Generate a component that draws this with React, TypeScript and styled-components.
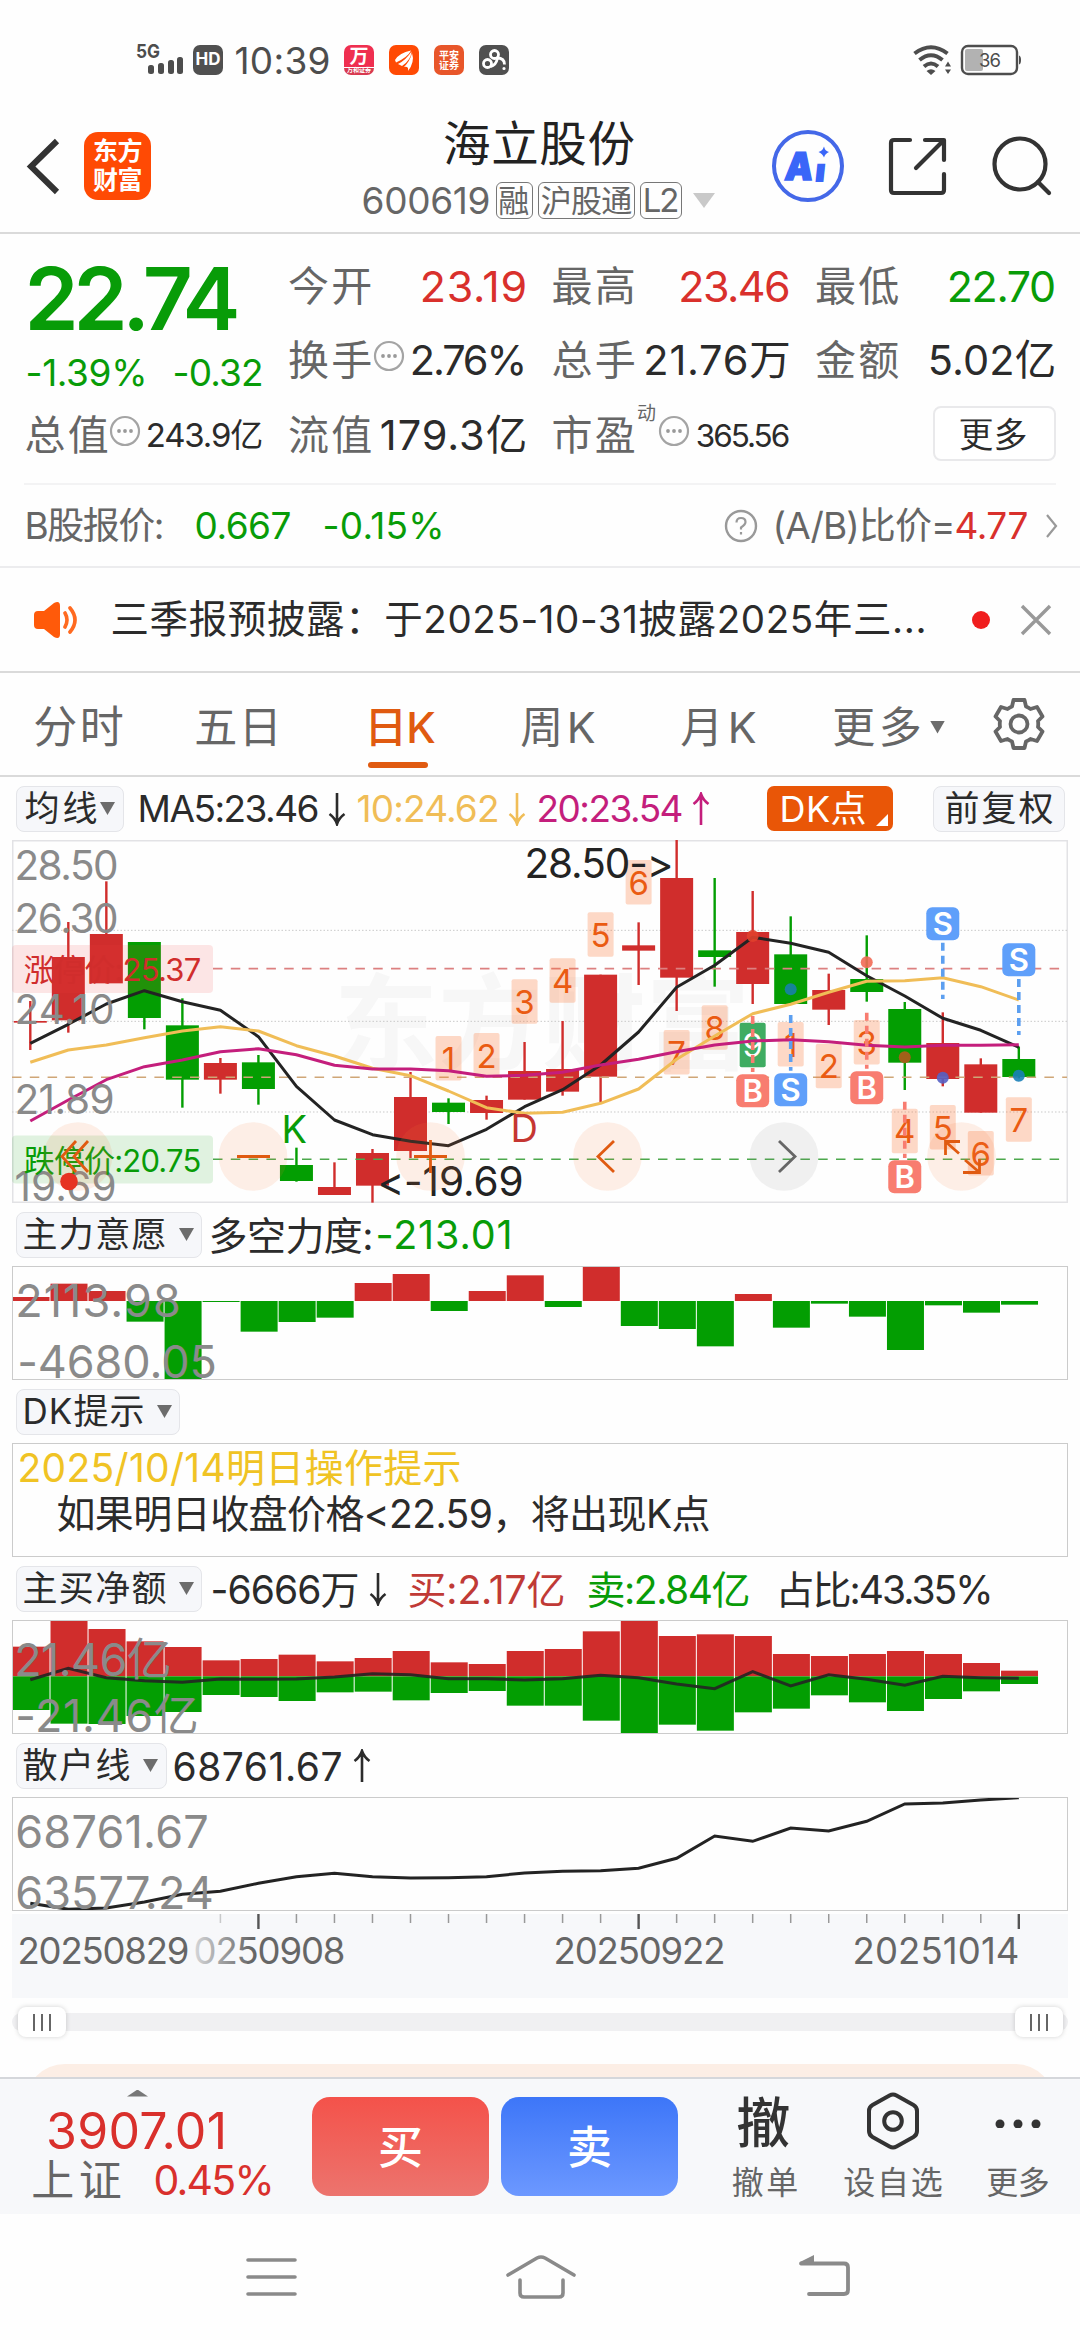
import React, { useLayoutEffect, useRef, useState } from 'react';
import styled, { createGlobalStyle } from 'styled-components';

const GREEN = '#089c08';
const RED = '#d9302c';
const UP = '#d02d2c';
const DOWN = '#039e02';
const ORANGE = '#e05a10';
const FONT = 'Inter, "Noto Sans CJK SC", sans-serif';

const Global = createGlobalStyle`
  body { margin: 0; background: #fefefe; font-family: ${FONT}; color: #2b2b2b; font-feature-settings: "calt" 0; }
  * { box-sizing: border-box; }
  svg { display: block; flex: none; }
`;

/* ---------- text that is tracked to fill a given measure ---------- */
const Label = styled.span<{ $w: number; $size: number; $color: string; $ml: number; $weight: number; $dy: number }>`
  display: block;
  flex: none;
  width: ${(p) => p.$w}px;
  margin-left: ${(p) => p.$ml}px;
  margin-top: ${(p) => p.$dy}px;
  font-size: ${(p) => p.$size}px;
  line-height: ${(p) => p.$size}px;
  font-weight: ${(p) => p.$weight};
  color: ${(p) => p.$color};
  white-space: nowrap;
  text-indent: -0.04em;
`;

type TProps = { w: number; s?: number; c?: string; ml?: number; wt?: number; dy?: number; children: string };

function T({ w, s = 37, c = '#2b2b2b', ml = 0, wt = 400, dy = 0, children }: TProps) {
  const ref = useRef<HTMLSpanElement>(null);
  const [track, setTrack] = useState(0);
  useLayoutEffect(() => {
    const el = ref.current;
    if (!el) return;
    const range = document.createRange();
    range.selectNodeContents(el);
    const natural = range.getBoundingClientRect().width;
    setTrack((w + s * 0.08 - natural) / Math.max(1, children.length - 1));
  }, []);
  return (
    <Label $w={w} $size={s} $color={c} $ml={ml} $weight={wt} $dy={dy}>
      <span ref={ref} style={{ letterSpacing: track }}>{children}</span>
    </Label>
  );
}

/* ---------- page bars ---------- */
const Page = styled.div`
  width: 1080px;
  height: 2340px;
  display: flex;
  flex-direction: column;
  overflow: hidden;
  background: #fefefe;
`;
const StatusBar = styled.div`
  height: 100px;
  padding: 20px 60px 0 136px;
  display: flex;
  align-items: center;
`;
const Badge = styled.div<{ $bg: string; $ml: number }>`
  width: 30px;
  height: 30px;
  margin-left: ${(p) => p.$ml}px;
  border-radius: 7px;
  background: ${(p) => p.$bg};
  overflow: hidden;
  display: flex;
  flex-direction: column;
  align-items: center;
  justify-content: center;
`;
const BadgeText = styled.span<{ $size: number; $color?: string }>`
  color: ${(p) => p.$color || '#fff'};
  font-size: ${(p) => p.$size}px;
  line-height: 1.05;
  font-weight: 700;
  white-space: nowrap;
`;
const Spacer = styled.div`
  flex: 1;
`;
const Header = styled.header`
  height: 134px;
  border-bottom: 2px solid #dadada;
  display: grid;
  grid-template-columns: 363px 352px 1fr;
`;
const HeaderSide = styled.div`
  display: flex;
  align-items: center;
`;
const HeaderTitle = styled.div`
  display: flex;
  flex-direction: column;
  padding-top: 19px;
`;
const Row = styled.div<{ $h?: number; $pl?: number }>`
  display: flex;
  align-items: center;
  flex: none;
  height: ${(p) => (p.$h ? p.$h + 'px' : 'auto')};
  padding-left: ${(p) => p.$pl || 0}px;
`;
const Logo = styled.div`
  width: 67px;
  height: 68px;
  margin-left: 24px;
  border-radius: 14px;
  background: #ff4a04;
  display: flex;
  flex-direction: column;
  align-items: center;
  justify-content: center;
  color: #fff;
  font-size: 25px;
  line-height: 29px;
  font-weight: 700;
  letter-spacing: -0.5px;
`;
const Tag = styled.span<{ $w: number; $ml: number }>`
  width: ${(p) => p.$w}px;
  height: 37px;
  margin-left: ${(p) => p.$ml}px;
  border: 1.5px solid #777;
  border-radius: 6px;
  display: flex;
  align-items: center;
  justify-content: center;
  flex: none;
`;

/* ---------- quote ---------- */
const Quote = styled.section`
  height: 249px;
  padding: 15px 24px 0 26px;
  display: grid;
  grid-template-columns: repeat(3, 237px) 239px;
  grid-template-rows: repeat(3, 74.5px);
  column-gap: 26.5px;
`;
const PriceCell = styled.div`
  grid-row: span 2;
  display: flex;
  flex-direction: column;
  padding-top: 5px;
`;
const Cell = styled.div`
  display: flex;
  align-items: center;
  justify-content: space-between;
  padding-right: 1px;
`;
const Pair = styled.div`
  display: flex;
  align-items: center;
`;
const Sup = styled.span`
  font-size: 19px;
  line-height: 20px;
  margin: -42px 0 0 3px;
  color: #666;
`;
const MoreButton = styled.button`
  width: 123px;
  height: 55px;
  margin: 8px 0 0 auto;
  border: 2px solid #e9e9eb;
  border-radius: 8px;
  background: #fff;
  padding: 0;
  display: flex;
  align-items: center;
  justify-content: center;
`;
const Rule = styled.div`
  height: 2px;
  flex: none;
  margin: 0 24px;
  background: #f3f3f4;
`;
const Strip = styled.section<{ $h: number; $line: string }>`
  height: ${(p) => p.$h}px;
  border-bottom: 2px solid ${(p) => p.$line};
  display: flex;
  align-items: center;
  flex: none;
`;
const RedDot = styled.span`
  width: 18px;
  height: 18px;
  border-radius: 50%;
  background: #f01e1e;
  margin-left: 47px;
`;
const Tab = styled.div<{ $w: number }>`
  width: ${(p) => p.$w}px;
  height: 100%;
  display: flex;
  align-items: center;
  position: relative;
  padding-top: 6px;
`;
const Underline = styled.i`
  position: absolute;
  left: 2px;
  bottom: 7px;
  width: 60px;
  height: 6px;
  border-radius: 3px;
  background: ${ORANGE};
`;

/* ---------- indicators ---------- */
const Picker = styled.div<{ $w: number; $ml?: number }>`
  width: ${(p) => p.$w}px;
  height: 46px;
  margin-left: ${(p) => p.$ml ?? 16}px;
  border: 1.5px solid #e4e5e9;
  border-radius: 8px;
  background: #f6f7fa;
  display: flex;
  align-items: center;
  flex: none;
  padding-left: 7px;
`;
const DkButton = styled.div`
  width: 126px;
  height: 45px;
  margin-left: 57px;
  border-radius: 7px;
  background: #e95607;
  display: flex;
  align-items: center;
  padding-left: 14px;
`;
const Caret = styled.i<{ $ml: number; $color?: string; $w?: number; $h?: number; $up?: boolean }>`
  flex: none;
  width: ${(p) => p.$w ?? 15}px;
  height: ${(p) => p.$h ?? 13}px;
  margin-left: ${(p) => p.$ml}px;
  background: ${(p) => p.$color || '#6c6c6c'};
  clip-path: ${(p) => (p.$up ? 'polygon(50% 0, 100% 100%, 0 100%)' : 'polygon(0 0, 100% 0, 50% 100%)')};
`;
const Panel = styled.div`
  margin: 0 12px;
  height: 114px;
  flex: none;
  border: 1.5px solid #cbcbcb;
  overflow: hidden;
`;
const Tip = styled(Panel)`
  padding: 0 0 0 6px;
`;
const Main = styled.div`
  margin: 0 12px;
  height: 363px;
  flex: none;
`;
const Axis = styled.div`
  margin: 3px 12px 0;
  height: 84px;
  flex: none;
  background: #f7f8fa;
`;
const SliderRow = styled.div`
  height: 66px;
  flex: none;
  padding: 9px 12px 0;
`;
const Track = styled.div`
  height: 18px;
  margin-top: 6px;
  border-radius: 9px;
  background: #f0f0f2;
  display: flex;
  align-items: center;
  justify-content: space-between;
  padding: 0 5px 0 6px;
`;
const Handle = styled.div`
  width: 48px;
  height: 30px;
  border-radius: 8px;
  background: #fff;
  box-shadow: 0 0 5px rgba(0, 0, 0, 0.18);
  display: flex;
  align-items: center;
  justify-content: center;
  gap: 6px;
`;
const Grip = styled.i`
  width: 2px;
  height: 17px;
  background: #666;
`;
const PeachClip = styled.div`
  height: 13px;
  flex: none;
  padding: 0 25px;
  overflow: hidden;
`;
const Peach = styled.div`
  height: 90px;
  border-radius: 40px;
  background: #fceee5;
`;

/* ---------- bottom ---------- */
const TradeBar = styled.footer`
  height: 137px;
  flex: none;
  border-top: 2px solid #d5d7db;
  background: #f7f8fa;
  display: flex;
`;
const IndexBox = styled.div`
  width: 312px;
  display: flex;
  flex-direction: column;
`;
const Trade = styled.button<{ $from: string; $to: string }>`
  width: 177px;
  height: 99px;
  margin: 18px 12px 0 0;
  border: 0;
  border-radius: 18px;
  background: linear-gradient(${(p) => p.$from}, ${(p) => p.$to});
  color: #fff;
  font: 500 45px/97px ${FONT};
  padding: 2px 0 0;
`;
const Action = styled.div<{ $w: number; $ml: number }>`
  width: ${(p) => p.$w}px;
  margin-left: ${(p) => p.$ml}px;
  display: flex;
  flex-direction: column;
  align-items: center;
`;
const ActionIcon = styled.div`
  height: 84px;
  display: flex;
  align-items: center;
`;
const SysNav = styled.nav`
  height: 125px;
  flex: none;
  display: flex;
  align-items: center;
  padding: 1px 0 0 246px;
`;

/* ---------- icons ---------- */
const Dots = ({ ml = 2 }: { ml?: number }) => (
  <svg width="32" height="32" viewBox="0 0 32 32" style={{ marginLeft: ml, marginTop: -9 }}>
    <circle cx="16" cy="16" r="14" fill="none" stroke="#a4a4a4" strokeWidth="2.200" />
    <circle cx="10" cy="16" r="1.9" fill="#999" /><circle cx="16" cy="16" r="1.9" fill="#999" /><circle cx="22" cy="16" r="1.9" fill="#999" />
  </svg>
);
const ArrowSvg = styled.svg<{ $ml: number; $up?: boolean }>`
  margin-left: ${(p) => p.$ml}px;
  transform: ${(p) => (p.$up ? 'scaleY(-1)' : 'none')};
`;
const Arrow = ({ c = '#2b2b2b', up, ml = 10 }: { c?: string; up?: boolean; ml?: number }) => (
  <ArrowSvg $ml={ml} $up={up} width="18" height="34" viewBox="0 0 18 34" fill="none" stroke={c} strokeWidth="2.6">
    <path d="M9 1V31M1.5 22Q7 26 9 32Q11 26 16.5 22" />
  </ArrowSvg>
);

const Signal = () => (
  <svg width="53" height="32" viewBox="0 0 53 32" fill="#4d4d4d">
    <text x="0" y="14" fontSize="19" fontWeight="700" fontFamily={FONT} textLength="24" lengthAdjust="spacingAndGlyphs">5G</text>
    <rect x="12" y="21" width="6" height="9" rx="2.5" /><rect x="22" y="19" width="6" height="11" rx="2.5" />
    <rect x="32" y="16" width="6" height="14" rx="2.5" /><rect x="41" y="13" width="6" height="17" rx="2.5" />
  </svg>
);
const Wifi = () => (
  <svg width="38" height="30" viewBox="0 0 38 30">
    <g fill="none" stroke="#4d4d4d" strokeWidth="4">
      <path d="M1.5 8.5Q18 -4 34.5 8.5" /><path d="M6.5 15Q18 5.500 29.500 15" /><path d="M11 21.500Q18 15.500 25 21.500" />
    </g>
    <path d="M13.500 26Q18 22.500 22.500 26L18 30Z M35 16.500L38 21.500H32Z M32 24.500H38L35 29Z" fill="#4d4d4d" />
  </svg>
);
const Battery = () => (
  <svg width="62" height="32" viewBox="0 0 62 32" style={{ marginLeft: 9, marginRight: -2 }}>
    <rect x="2" y="2" width="55" height="28" rx="6" fill="none" stroke="#4d4d4d" strokeWidth="2.4" />
    <rect x="5" y="5" width="18" height="22" rx="2" fill="#b2b2b2" />
    <path d="M59 11.500Q61 12 61 16T59 20.500Z" fill="#4d4d4d" />
    <text x="19" y="22.500" fontSize="18.500" fontFamily={FONT} fill="#4d4d4d" textLength="22">36</text>
  </svg>
);
const Gear = () => (
  <svg width="52" height="54" viewBox="-26 -27 52 54" fill="none" stroke="#666" strokeWidth="3.8" strokeLinejoin="round">
    <path d="M-5.500 -24H5.500L7 -17.500A18 18 0 0 1 11.500 -15L18 -17L23.500 -7.500L19 -3A19 19 0 0 1 19 3L23.500 7.500L18 17L11.500 15A18 18 0 0 1 7 17.500L5.500 24H-5.500L-7 17.500A18 18 0 0 1 -11.500 15L-18 17L-23.500 7.500L-19 3A19 19 0 0 1 -19 -3L-23.500 -7.500L-18 -17L-11.500 -15A18 18 0 0 1 -7 -17.500Z" />
    <circle r="8.500" />
  </svg>
);

/* ---------- chart data, vertical values in thirds of a pixel ---------- */
const cx = (i: number) => 18.3 + 38.02 * i;
const y3 = (v: number, top: number) => (v - top) / 3;
const pts = (vals: number[], top: number) => vals.map((v, i) => `${cx(i).toFixed(1)},${y3(v, top).toFixed(1)}`).join(' ');

type Candle = ['u' | 'd', number, number, number, number];
const CANDLES: Candle[] = [
  ['u', 513, 660, 573, 578], ['u', 276, 608, 381, 571], ['u', 154, 460, 312, 460], ['d', 336, 598, 336, 564],
  ['d', 505, 833, 586, 749], ['u', 684, 791, 699, 749], ['d', 675, 824, 697, 777], ['d', 953, 1055, 1005, 1053],
  ['u', 997, 1095, 1071, 1095], ['u', 957, 1118, 969, 1067], ['u', 726, 984, 801, 963], ['d', 805, 882, 818, 846],
  ['u', 797, 869, 810, 849], ['u', 636, 809, 723, 809], ['u', 573, 797, 717, 785], ['u', 434, 816, 434, 740],
  ['u', 277, 465, 346, 362], ['u', 30, 543, 144, 443], ['d', 144, 470, 361, 381], ['u', 183, 522, 306, 462],
  ['d', 259, 522, 373, 522], ['u', 431, 585, 480, 539], ['d', 316, 515, 447, 486], ['d', 516, 780, 537, 698],
  ['u', 547, 769, 639, 747], ['u', 685, 848, 703, 848], ['d', 650, 745, 687, 741],
];
const MA5 = [640, 583, 522, 482, 515, 541, 620, 769, 870, 914, 934, 947, 898, 830, 779, 705, 606, 472, 406, 322, 340, 367, 437, 498, 565, 601, 652];
const MA10 = [697, 660, 645, 623, 603, 590, 603, 647, 678, 715, 737, 783, 833, 850, 847, 820, 777, 688, 618, 551, 523, 487, 454, 452, 443, 470, 510];
const MA20 = [873, 810, 749, 710, 690, 665, 656, 674, 706, 717, 717, 722, 739, 736, 727, 705, 688, 665, 645, 633, 629, 635, 646, 651, 646, 646, 644];
const COUNTS: [number, string, number][] = [
  [11, '1', 618], [12, '2', 609], [13, '3', 448], [14, '4', 385], [15, '5', 247], [16, '6', 90], [17, '7', 600], [18, '8', 526],
  [19, '9', 578], [20, '1', 576], [21, '2', 641], [22, '3', 570], [23, '4', 836], [24, '5', 825], [25, '6', 903], [26, '7', 802],
];
const SIGNALS: [number, 'B' | 'S', number, number, number, number, string][] = [
  [19, 'B', 733, 558, 726, 318, '#e0402c'], [20, 'S', 730, 555, 722, 478, '#187fa8'], [22, 'B', 724, 548, 716, 397, '#f26a55'],
  [23, 'B', 991, 815, 984, 682, '#b35a1c'], [24, 'S', 232, 338, 507, 743, '#5560c4'], [26, 'S', 340, 447, 615, 737, '#1a7fb8'],
];
const FORCE = [291, 251, 273, 365, 538, 306, 395, 366, 353, 249, 222, 333, 273, 226, 321, 201, 378, 387, 439, 282, 383, 311, 350, 450, 316, 338, 314];
const BUY = [290, 213, 237, 274, 291, 331, 327, 314, 334, 324, 303, 337, 342, 303, 297, 244, 213, 258, 253, 258, 312, 318, 312, 303, 312, 339, 362];
const SELL = [480, 521, 522, 498, 486, 435, 441, 453, 427, 425, 451, 429, 423, 467, 467, 512, 549, 524, 542, 487, 476, 436, 457, 483, 447, 424, 402];
const NET = [389, 355, 383, 392, 397, 387, 388, 387, 381, 371, 374, 386, 386, 390, 386, 376, 383, 402, 416, 365, 408, 374, 388, 406, 379, 383, 385];
const RETAIL = [1060, 1078, 1074, 1056, 1033, 1024, 1000, 980, 970, 980, 984, 983, 980, 969, 964, 962, 955, 925, 858, 874, 834, 843, 814, 762, 759, 750, 743];

const ChartText = ({ x, y, w, s = 40.5, c = '#8a8a8a', children }: { x: number; y: number; w: number; s?: number; c?: string; children: string }) => (
  <text x={x - s * 0.04} y={y} fontSize={s} fill={c} fontFamily={FONT} textLength={w + s * 0.08}>{children}</text>
);

function KChart() {
  const y = (v: number) => y3(v, 30);
  return (
    <svg width="1056" height="363" viewBox="0 0 1056 363">
      <text x="322" y="222" fontSize="104" fontWeight="700" fill="#f7f7f7" fontFamily={FONT} textLength="416">东方财富</text>
      <rect x="0.750" y="0.750" width="1054.500" height="361.500" fill="none" stroke="#e2e2e5" strokeWidth="1.500" />
      {[301, 574, 846].map((v) => <line key={v} x1="0" x2="1055" y1={y(v)} y2={y(v)} stroke="#c9c9c9" strokeDasharray="1.500 2" />)}
      {CANDLES.map(([k, hi, lo, top, bot], i) => (
        <g key={i} fill={k === 'u' ? UP : DOWN}>
          <rect x={cx(i) - 1.2} y={y(hi)} width="2.400" height={(lo - hi) / 3} />
          <rect x={cx(i) - 16.5} y={y(top)} width="33" height={(bot - top) / 3} />
        </g>
      ))}
      <rect x="0" y="105" width="201" height="48" rx="4" fill="#f23c3c" fillOpacity="0.13" />
      <rect x="0" y="295.500" width="201" height="48" rx="4" fill="#0aa00a" fillOpacity="0.12" />
      <line x1="201" x2="1055" y1="128.700" y2="128.700" stroke="#dc8080" strokeWidth="1.800" strokeDasharray="9.500 8.300" />
      <line x1="0" x2="1055" y1="237.300" y2="237.300" stroke="#cfa677" strokeWidth="1.500" strokeDasharray="9.500 8.300" />
      <line x1="201" x2="1055" y1="319.300" y2="319.300" stroke="#4ca84c" strokeWidth="1.500" strokeDasharray="9.500 8.300" />
      {COUNTS.map(([i, n, top], k) => (
        <g key={k}>
          <rect x={cx(i) - 13} y={y(top)} width="26" height="44.500" rx="2" fill={n === '9' ? '#3fac62' : '#fa7330'} fillOpacity={n === '9' ? 1 : 0.27} />
          <text x={cx(i)} y={y(top) + 34.5} fontSize="33" textAnchor="middle" fontFamily={FONT} fill={n === '9' ? '#fff' : '#ea5b12'}>{n}</text>
        </g>
      ))}
      <g fill="none" strokeWidth="3" strokeLinejoin="round">
        <polyline points={pts(MA5, 30)} stroke="#232323" />
        <polyline points={pts(MA10, 30)} stroke="#f0bd57" />
        <polyline points={pts(MA20, 30)} stroke="#c41e7c" />
      </g>
      {SIGNALS.map(([i, n, top, a, b, dot, dc], k) => (
        <g key={k}>
          <line x1={cx(i)} x2={cx(i)} y1={y(a)} y2={y(b)} stroke={n === 'B' ? '#f87c70' : '#5c9ff0'} strokeWidth="3.600" strokeDasharray="8 5" />
          <circle cx={cx(i)} cy={y(dot)} r="6" fill={dc} fillOpacity="0.9" />
          <rect x={cx(i) - 16.5} y={y(top)} width="33" height="33" rx="6" fill={n === 'B' ? '#f87d70' : '#5f9ffa'} />
          <text x={cx(i)} y={y(top) + 27.5} fontSize="31" fontWeight="600" textAnchor="middle" fontFamily={FONT} fill="#fff">{n}</text>
        </g>
      ))}
      <ChartText x={4} y={40} w={101}>28.50</ChartText>
      <ChartText x={4} y={92.5} w={101}>26.30</ChartText>
      <ChartText x={4} y={183.5} w={97}>24.10</ChartText>
      <ChartText x={4} y={273.5} w={97}>21.89</ChartText>
      <ChartText x={4} y={360.5} w={99}>19.69</ChartText>
      <ChartText x={13} y={141} w={175} s={31} c={UP}>涨停价:25.37</ChartText>
      <ChartText x={13} y={331.5} w={175} s={31} c={GREEN}>跌停价:20.75</ChartText>
      <ChartText x={514} y={37.5} w={146} c="#232323">28.50-&gt;</ChartText>
      <ChartText x={367} y={355.5} w={143} c="#232323">&lt;-19.69</ChartText>
      <ChartText x={271} y={303} w={23} s={38} c={GREEN}>K</ChartText>
      <ChartText x={500} y={302} w={23} s={38} c="#c53632">D</ChartText>
      {[66, 241, 418.5, 595.5, 772, 949.5].map((x, k) => (
        <circle key={k} cx={x} cy="316.500" r="34.300" fill={k === 4 ? '#777' : '#fa7838'} fillOpacity={k === 4 ? 0.1 : 0.12} />
      ))}
      <circle cx="57" cy="341.500" r="8.800" fill="#e63222" />
      <g fill="none" stroke={ORANGE} strokeWidth="2.800">
        <path d="M64 301L50 316.500L64 332M76 301L62 316.500L76 332" />
        <path d="M225 316.500H258M402 316.500H435M418.500 300V333" />
        <path d="M602 301L586 316.500L602 332" />
        <path d="M933.500 315V301.500H948M934 302L947 313.500M967.500 319V332.500H951M967 332L953 320" />
      </g>
      <path d="M767 301L783 316.500L767 332" fill="none" stroke="#666" strokeWidth="2.800" />
    </svg>
  );
}

function ForceChart() {
  return (
    <svg width="1054" height="112" viewBox="1 1 1054 112">
      {FORCE.map((v, i) => {
        const a = Math.min(v, 303), h = Math.abs(v - 303) / 3;
        return <rect key={i} x={i * 38.02 + 0.5} y={y3(a, 198)} width="37" height={h} fill={v < 303 ? UP : DOWN} />;
      })}
      <ChartText x={5} y={50.5} w={162} s={45}>2113.98</ChartText>
      <ChartText x={7} y={112} w={196} s={45}>-4680.05</ChartText>
    </svg>
  );
}
function NetChart() {
  return (
    <svg width="1054" height="112" viewBox="1 1 1054 112">
      {BUY.map((v, i) => (
        <g key={i}>
          <rect x={i * 38.02 + 0.5} y={y3(v, 210)} width="37" height={(379 - v) / 3} fill={UP} />
          <rect x={i * 38.02 + 0.5} y={y3(379, 210)} width="37" height={(SELL[i] - 379) / 3} fill={DOWN} />
        </g>
      ))}
      <polyline points={pts(NET, 210)} fill="none" stroke="#232323" strokeOpacity="0.9" strokeWidth="3" />
      <ChartText x={4} y={56} w={154} s={45}>21.46亿</ChartText>
      <ChartText x={5} y={112} w={180} s={45}>-21.46亿</ChartText>
    </svg>
  );
}
function RetailChart() {
  return (
    <svg width="1054" height="112" viewBox="1 1 1054 112">
      <polyline points={pts(RETAIL, 741)} fill="none" stroke="#232323" strokeWidth="3" />
      <ChartText x={5} y={50.5} w={190} s={45}>68761.67</ChartText>
      <ChartText x={5} y={112} w={195} s={45}>63577.24</ChartText>
    </svg>
  );
}
function DateAxis() {
  return (
    <svg width="1056" height="84" viewBox="0 0 1056 84">
      <defs>
        <linearGradient id="fade" gradientUnits="userSpaceOnUse" x1="180" x2="240" y1="0" y2="0">
          <stop offset="0" stopColor="#666" stopOpacity="0.200" /><stop offset="1" stopColor="#666" />
        </linearGradient>
      </defs>
      {Array.from({ length: 22 }, (_, k) => k + 5).map((i) => {
        const big = i % 10 === 6;
        return <line key={i} x1={cx(i)} x2={cx(i)} y1="0" y2={big ? 15 : 9} stroke={big ? '#555' : '#999'} strokeWidth={big ? 2.4 : 1.5} strokeOpacity={i === 5 ? 0.5 : 1} />;
      })}
      <ChartText x={7} y={49.5} w={169} s={36.5} c="#666">20250829</ChartText>
      <ChartText x={183} y={49.5} w={149} s={36.5} c="url(#fade)">0250908</ChartText>
      <ChartText x={543} y={49.5} w={169} s={36.5} c="#666">20250922</ChartText>
      <ChartText x={842} y={49.5} w={164} s={36.5} c="#666">20251014</ChartText>
    </svg>
  );
}

const G = '#666';

export default function App() {
  return (
    <Page>
      <Global />
      <StatusBar>
        <Signal />
        <Badge $bg="#505050" $ml={4}><BadgeText $size={17}>HD</BadgeText></Badge>
        <T w={93} s={37} c="#4d4d4d" ml={13}>10:39</T>
        <Badge $bg="linear-gradient(#ef2f50 0 72%, #fff 72% 78%, #d83a50 78%)" $ml={15}><BadgeText $size={19}>万</BadgeText><BadgeText $size={6}>万和证券</BadgeText></Badge>
        <Badge $bg="#ff4a04" $ml={15}>
          <svg width="30" height="30" viewBox="0 0 30 30" fill="#fff"><path d="M6 15Q10 8 22 5.500Q19 12 7 17.500ZM9 19Q17 15 22.500 6.500Q22 15 13 21ZM15 22Q21 16 23 8Q26 17 19 26Q20 21 15 22Z" /></svg>
        </Badge>
        <Badge $bg="#e8562a" $ml={15}><BadgeText $size={10}>平安</BadgeText><BadgeText $size={10}>证券</BadgeText></Badge>
        <Badge $bg="#505050" $ml={15}>
          <svg width="30" height="30" viewBox="0 0 30 30" fill="none" stroke="#fff" strokeWidth="2.800"><circle cx="15.500" cy="9.500" r="4" /><circle cx="8.500" cy="18.500" r="4" /><path d="M18 13Q25.500 13 25.500 19.500M11.500 21.500Q17 20.500 18.500 13" /><circle cx="25" cy="23.500" r="0.800" strokeWidth="1.600" /></svg>
        </Badge>
        <Spacer />
        <Wifi />
        <Battery />
      </StatusBar>

      <Header>
        <HeaderSide>
          <svg width="34" height="58" viewBox="0 0 34 58" style={{ marginLeft: 26 }} fill="none" stroke="#333" strokeWidth="6"><path d="M31 4L5 29.500L31 55" /></svg>
          <Logo><span>东方</span><span>财富</span></Logo>
        </HeaderSide>
        <HeaderTitle>
          <Row $h={50} $pl={82}><T w={188} s={47.5} c="#222">海立股份</T></Row>
          <Row $h={63}>
            <T w={126} c={G}>600619</T>
            <Tag $w={37} $ml={7}><T w={30} s={31} c={G}>融</T></Tag>
            <Tag $w={97} $ml={5}><T w={89} s={31} c={G}>沪股通</T></Tag>
            <Tag $w={42} $ml={5}><T w={34} s={33} c={G}>L2</T></Tag>
            <Caret $ml={11} $w={22} $h={15} $color="#c9c9c9" />
          </Row>
        </HeaderTitle>
        <HeaderSide>
          <svg width="74" height="74" viewBox="0 0 74 74" style={{ marginLeft: 56 }}>
            <circle cx="37" cy="37" r="34" fill="none" stroke="#4468e8" strokeWidth="4" />
            <path d="M53 17.500Q54 22 58 23Q54 24.500 53 28.500Q51.500 24.500 47.500 23Q51.500 22 53 17.500Z" fill="#3a66f8" />
            <g transform="translate(0 52) skewX(-6)"><text x="13" y="-1" fontSize="38" fontWeight="900" fontFamily={FONT} fill="#3a66f8" stroke="#3a66f8" strokeWidth="1.500" textLength="28" lengthAdjust="spacingAndGlyphs">A</text><text x="44" y="0" fontSize="30" fontWeight="900" fontFamily={FONT} fill="#3a66f8" stroke="#3a66f8" strokeWidth="2">ı</text></g>
          </svg>
          <svg width="60" height="60" viewBox="0 0 60 60" style={{ marginLeft: 42 }} fill="none" stroke="#333" strokeWidth="4.200" strokeLinecap="round" strokeLinejoin="round">
            <path d="M23 4H7Q4 4 4 7V54Q4 57 7 57H54Q57 57 57 54V38M38 4H57V24M56 5L29 32" />
          </svg>
          <svg width="64" height="64" viewBox="0 0 64 64" style={{ marginLeft: 42 }} fill="none" stroke="#333" strokeWidth="4.200" strokeLinecap="round">
            <circle cx="31" cy="30" r="25.500" /><path d="M49 48L60 59" />
          </svg>
        </HeaderSide>
      </Header>

      <Quote>
        <PriceCell>
          <Row $h={88} $pl={2}><T w={209} s={87} c={GREEN} wt={600}>22.74</T></Row>
          <Row $h={60} $pl={1}><T w={119} c={GREEN}>-1.39%</T><T w={88} c={GREEN} ml={28}>-0.32</T></Row>
        </PriceCell>
        <Cell><T w={81} s={41} c={G}>今开</T><T w={104} s={43} c={RED}>23.19</T></Cell>
        <Cell><T w={81} s={41} c={G}>最高</T><T w={109} s={43} c={RED}>23.46</T></Cell>
        <Cell><T w={81} s={41} c={G}>最低</T><T w={106} s={43} c={GREEN}>22.70</T></Cell>
        <Cell><Pair><T w={81} s={41} c={G}>换手</T><Dots /></Pair><T w={114} s={41.5}>2.76%</T></Cell>
        <Cell><T w={81} s={41} c={G}>总手</T><T w={144} s={41.5}>21.76万</T></Cell>
        <Cell><T w={81} s={41} c={G}>金额</T><T w={125} s={41.5}>5.02亿</T></Cell>
        <Cell><Pair><T w={81} s={41} c={G}>总值</T><Dots /></Pair><T w={115} s={33}>243.9亿</T></Cell>
        <Cell><T w={81} s={41} c={G}>流值</T><T w={144} s={41.5}>179.3亿</T></Cell>
        <Cell><Pair><T w={81} s={41} c={G}>市盈</T><Sup>动</Sup><Dots ml={2} /></Pair><T w={92} s={31.5}>365.56</T></Cell>
        <MoreButton><T w={68} s={35}>更多</T></MoreButton>
      </Quote>
      <Rule />
      <Strip $h={83} $line="#ececee">
        <T w={137} s={37} c={G} ml={26}>B股报价:</T>
        <T w={94} c={GREEN} ml={33}>0.667</T>
        <T w={119} c={GREEN} ml={34}>-0.15%</T>
        <svg width="34" height="34" viewBox="0 0 34 34" style={{ marginLeft: 281 }}>
          <circle cx="17" cy="17" r="15" fill="none" stroke="#999" strokeWidth="2.400" />
          <path d="M12.500 13.500Q12.500 9 17 9T21.500 13Q21.500 15.500 17 18.500V20.500M17 23V25.500" fill="none" stroke="#999" strokeWidth="2.200" />
        </svg>
        <T w={180} c={G} ml={16}>(A/B)比价=</T>
        <T w={71} c={RED} ml={2}>4.77</T>
        <svg width="12" height="24" viewBox="0 0 12 24" style={{ marginLeft: 19 }} fill="none" stroke="#999" strokeWidth="2.200"><path d="M1 1L10 12L1 23" /></svg>
      </Strip>
      <Strip $h={105} $line="#dadada">
        <svg width="48" height="38" viewBox="0 0 48 38" style={{ marginLeft: 32 }}>
          <path d="M6 10H12L22 2Q28 -1 28 5V33Q28 39 22 36L12 28H6Q2 28 2 24V14Q2 10 6 10Z" fill="#ff5a0a" />
          <path d="M33 12Q37 19 33 26M38 7Q48 19 38 31" fill="none" stroke="#ff6a20" strokeWidth="3.600" strokeLinecap="round" />
        </svg>
        <T w={813} s={38.5} ml={32}>三季报预披露：于2025-10-31披露2025年三...</T>
        <RedDot />
        <svg width="32" height="32" viewBox="0 0 32 32" style={{ marginLeft: 30 }} stroke="#999" strokeWidth="3.400"><path d="M2 2L30 30M30 2L2 30" /></svg>
      </Strip>
      <Strip $h={104} $line="#dadada">
        <Row $pl={35} $h={102}>
          <Tab $w={161}><T w={87} s={44} c={G}>分时</T></Tab>
          <Tab $w={170}><T w={84} s={43} c={G}>五日</T></Tab>
          <Tab $w={156}><T w={68} s={43} c={ORANGE} wt={500}>日K</T><Underline /></Tab>
          <Tab $w={160}><T w={72} s={43} c={G}>周K</T></Tab>
          <Tab $w={152}><T w={73} s={43} c={G}>月K</T></Tab>
          <Tab $w={159}><T w={86} s={43} c={G}>更多</T><Caret $ml={10} /></Tab>
          <Gear />
        </Row>
      </Strip>

      <Row $h={63}>
        <Picker $w={108}><T w={70} s={35} ml={2}>均线</T><Caret $ml={4} /></Picker>
        <T w={179} ml={15}>MA5:23.46</T><Arrow />
        <T w={140} c="#f0bd57" ml={12}>10:24.62</T><Arrow c="#f0bd57" />
        <T w={144} c="#c41e7c" ml={12}>20:23.54</T><Arrow c="#c41e7c" up />
        <DkButton><T w={84} s={36} c="#fff">DK点</T>
          <svg width="12" height="12" viewBox="0 0 12 12" style={{ marginLeft: 11, marginTop: 22 }}><path d="M12 0V12H0Z" fill="#fff" /></svg>
        </DkButton>
        <Picker $w={132} $ml={40}><T w={106} s={35} ml={5}>前复权</T></Picker>
      </Row>
      <Main><KChart /></Main>

      <Row $h={63}>
        <Picker $w={186}><T w={141} s={35}>主力意愿</T><Caret $ml={14} /></Picker>
        <T w={162} s={39} ml={8} dy={2}>多空力度:</T><T w={134} s={39.5} c={GREEN} ml={5} dy={2}>-213.01</T>
      </Row>
      <Panel><ForceChart /></Panel>

      <Row $h={63}>
        <Picker $w={164}><T w={119} s={35}>DK提示</T><Caret $ml={14} /></Picker>
      </Row>
      <Tip>
        <Row $h={46}><T w={441} s={39} c="#f0c324" dy={1}>2025/10/14明日操作提示</T></Row>
        <Row $h={46} $pl={39}><T w={651} s={39} dy={1}>如果明日收盘价格&lt;22.59，将出现K点</T></Row>
      </Tip>

      <Row $h={63}>
        <Picker $w={186}><T w={141} s={35}>主买净额</T><Caret $ml={14} /></Picker>
        <T w={146} s={39} ml={10} dy={2}>-6666万</T><Arrow ml={11} />
        <T w={155} s={39} c="#c03a36" ml={22} dy={2}>买:2.17亿</T>
        <T w={161} s={39} c={GREEN} ml={24} dy={2}>卖:2.84亿</T>
        <T w={215} s={39} ml={28} dy={2}>占比:43.35%</T>
      </Row>
      <Panel><NetChart /></Panel>

      <Row $h={63}>
        <Picker $w={151}><T w={105} s={35}>散户线</T><Caret $ml={14} /></Picker>
        <T w={167} s={39} ml={7} dy={2}>68761.67</T><Arrow up ml={12} />
      </Row>
      <Panel><RetailChart /></Panel>

      <Axis><DateAxis /></Axis>
      <SliderRow>
        <Track>
          <Handle><Grip /><Grip /><Grip /></Handle>
          <Handle><Grip /><Grip /><Grip /></Handle>
        </Track>
      </SliderRow>
      <PeachClip><Peach /></PeachClip>

      <TradeBar>
        <IndexBox>
          <Row $h={28} $pl={127}><Caret $ml={0} $w={21} $h={7} $up $color="#777" /></Row>
          <Row $h={48} $pl={48}><T w={177} s={50} c={RED}>3907.01</T></Row>
          <Row $h={50} $pl={33}><T w={87} s={43} c={G}>上证</T><T w={118} s={41} c={RED} ml={35}>0.45%</T></Row>
        </IndexBox>
        <Trade $from="#f4524a" $to="#ec746e">买</Trade>
        <Trade $from="#3d76f8" $to="#6c98ff">卖</Trade>
        <Action $w={64} $ml={43}><ActionIcon><T w={53} s={54} wt={500} c="#333" dy={6}>撤</T></ActionIcon><T w={64} s={32} c={G} dy={4}>撤单</T></Action>
        <Action $w={98} $ml={47}>
          <ActionIcon>
            <svg width="56" height="60" viewBox="-28 -30 56 60" fill="none" stroke="#333" strokeWidth="4" strokeLinejoin="round">
              <path d="M-3.500 -25.500Q0 -27.500 3.500 -25.500L20.500 -16Q24 -14 24 -10V10Q24 14 20.500 16L3.500 25.500Q0 27.500 -3.500 25.500L-20.500 16Q-24 14 -24 10V-10Q-24 -14 -20.500 -16Z" /><circle r="8.800" />
            </svg>
          </ActionIcon>
          <T w={97} s={32} c={G} dy={4}>设自选</T>
        </Action>
        <Action $w={62} $ml={45}>
          <ActionIcon><svg width="48" height="14" viewBox="0 0 48 14" fill="#333"><circle cx="6" cy="10" r="4.500" /><circle cx="24" cy="10" r="4.500" /><circle cx="42" cy="10" r="4.500" /></svg></ActionIcon>
          <T w={61} s={32} c={G} dy={4}>更多</T>
        </Action>
      </TradeBar>

      <SysNav>
        <svg width="52" height="44" viewBox="0 0 52 44" stroke="#8a8a8a" strokeWidth="3.600" strokeLinecap="round"><path d="M2 5H49M2 22H49M2 39H49" /></svg>
        <svg width="72" height="46" viewBox="0 0 72 46" style={{ marginLeft: 207 }} fill="none" stroke="#8a8a8a" strokeWidth="3.600" strokeLinecap="round" strokeLinejoin="round">
          <path d="M3 21L32 4Q36 2 40 4L69 21M15 26V39Q15 43 19 43H54Q58 43 58 39V26" />
        </svg>
        <svg width="54" height="46" viewBox="0 0 54 46" style={{ marginLeft: 222 }} fill="none" stroke="#8a8a8a" strokeWidth="3.800" strokeLinecap="round">
          <path d="M2 9.500H45Q49 9.500 49 13.500V36Q49 40 45 40H10" /><path d="M1 8L15 1V10H1Z" fill="#8a8a8a" stroke="none" />
        </svg>
      </SysNav>
    </Page>
  );
}
